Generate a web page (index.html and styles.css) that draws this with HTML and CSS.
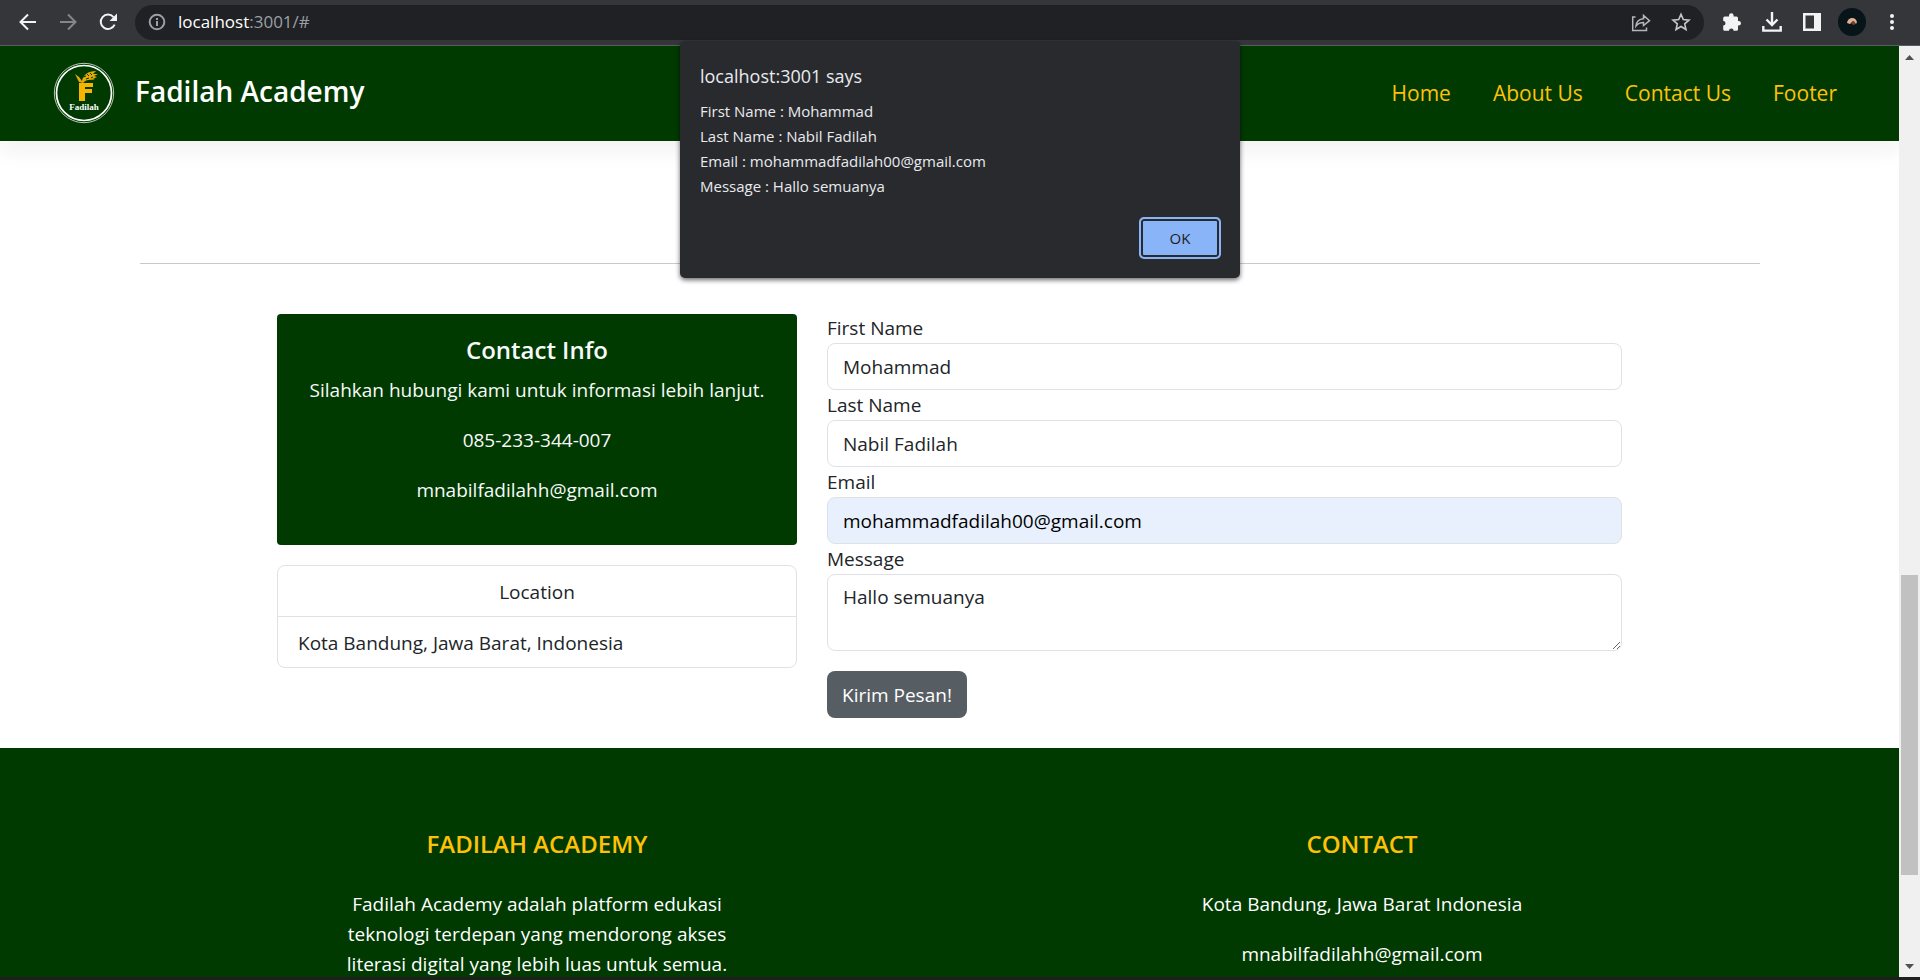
FILE: index.html
```html
<!DOCTYPE html>
<html lang="id">
<head>
<meta charset="utf-8">
<title>Fadilah Academy</title>
<link rel="stylesheet" href="styles.css">
</head>
<body>
<div class="browser">
  <div class="toolbar">
    <button class="tool" aria-label="Back"><svg width="20" height="20" viewBox="0 0 20 20" fill="none" stroke="#f1f3f4" stroke-width="2"><path d="M18 10H3M10 2.500L2.500 10L10 17.500"/></svg></button>
    <button class="tool" aria-label="Forward"><svg width="20" height="20" viewBox="0 0 20 20" fill="none" stroke="#85868a" stroke-width="2"><path d="M2 10H17M10 2.500L17.500 10L10 17.500"/></svg></button>
    <button class="tool" aria-label="Reload"><svg width="20" height="20" viewBox="0 0 20 20" fill="none" stroke="#f1f3f4" stroke-width="2"><path d="M16.600 12.600A7.200 7.200 0 1 1 15.500 5.200"/><path d="M19 1.500V9H11.500Z" fill="#f1f3f4" stroke="none"/></svg></button>
    <div class="omnibox">
      <svg width="18" height="18" viewBox="0 0 18 18" fill="none" stroke="#9aa0a6" stroke-width="2"><circle cx="9" cy="9" r="7.300"/><path d="M9 8V13M9 5V7"/></svg>
      <div class="url"><span class="host">localhost</span>:3001/#</div>
      <button class="tool" aria-label="Share"><svg width="20" height="20" viewBox="0 0 20 20" fill="none" stroke="#b4b6b9" stroke-width="1.500"><path d="M4.500 5H1.700V18.500H15.500V15.500"/><path d="M5 14C5.500 9.500 8 7 12.500 6.700V3.500L18.500 8.700L12.500 13.500V10.500C9 10.500 7 11.500 5 14Z"/></svg></button>
      <button class="tool" aria-label="Bookmark"><svg width="20" height="20" viewBox="0 0 20 20" fill="none" stroke="#c4c7c9" stroke-width="1.600"><path d="M10 2.300L12.300 7.600L18 8.100L13.700 11.900L15 17.500L10 14.500L5 17.500L6.300 11.900L2 8.100L7.700 7.600Z"/></svg></button>
    </div>
    <div class="actions">
      <button class="tool" aria-label="Extensions"><svg width="20" height="20" viewBox="0 0 20 20" fill="#f1f3f4"><path d="M7 3.500A2.300 2.300 0 0 1 11.600 3.500V4.500H14.500A1.500 1.500 0 0 1 16 6V9H16.700A2.300 2.300 0 0 1 16.700 13.600H16V17.300A1.500 1.500 0 0 1 14.500 18.800H11.600A2.300 2.300 0 0 0 7 18.800H2.700A1.500 1.500 0 0 1 1.200 17.300V13.600A2.300 2.300 0 0 0 1.200 9V6A1.500 1.500 0 0 1 2.700 4.500H7Z"/></svg></button>
      <button class="tool" aria-label="Downloads"><svg width="20" height="20" viewBox="0 0 20 20" fill="none" stroke="#f1f3f4" stroke-width="2.400"><path d="M10 0V13M4.500 7.500L10 13L15.500 7.500M1.300 14V18.600H18.700V14"/></svg></button>
      <button class="tool" aria-label="Side panel"><svg width="20" height="20" viewBox="0 0 20 20"><path fill="#f1f3f4" fill-rule="evenodd" d="M1 1H19V19H1ZM3.500 3.500V16.500H12V3.500Z"/></svg></button>
      <button class="tool avatar" aria-label="Profile"><svg width="28" height="28" viewBox="0 0 28 28"><circle cx="14" cy="14" r="14" fill="#071419"/><path d="M9 15A5.200 6 0 0 1 19 14L18 16L15 13L12 16Z" fill="#e3b08f"/><path d="M13 15L16 13L18 16L15 17Z" fill="#6b4434"/></svg></button>
      <button class="tool" aria-label="Menu"><svg width="20" height="20" viewBox="0 0 20 20" fill="#f1f3f4"><circle cx="10" cy="4" r="2"/><circle cx="10" cy="10" r="2"/><circle cx="10" cy="16" r="2"/></svg></button>
    </div>
  </div>

  <div class="viewport">
    <div class="page">
      <header class="navbar">
        <a class="brand" href="#">
          <svg width="62" height="62" viewBox="0 0 62 62">
            <circle cx="31" cy="31" r="29.700" fill="none" stroke="#b7c8b7" stroke-width="1"/>
            <circle cx="31" cy="31" r="27.500" fill="none" stroke="#fff" stroke-width="1.700"/>
            <path d="M26 21H40V25H32V27H39V31H32V39H26Z" fill="#f7b500"/>
            <path d="M26 20L22 12L26 15L29 19C30 13 35 9 43 9L40 12L45 12L41 14L44 15L40 17L42 18C36 17 32 18 30 21Z" fill="#e5aa08"/>
            <path d="M30 15L33 14M34 12L36 14M37 11L39 13M33 17L36 16M38 16L40 15" stroke="#003a00" stroke-width="1"/>
            <text class="logo-text" x="31" y="48" text-anchor="middle">Fadilah</text>
          </svg>
          <span class="brand-name">Fadilah Academy</span>
        </a>
        <nav class="links">
          <a href="#">Home</a>
          <a href="#">About Us</a>
          <a href="#">Contact Us</a>
          <a href="#">Footer</a>
        </nav>
      </header>

      <main class="container">
        <hr class="rule">
        <div class="contact">
          <div class="side">
            <section class="info">
              <h2>Contact Info</h2>
              <p>Silahkan hubungi kami untuk informasi lebih lanjut.</p>
              <p>085-233-344-007</p>
              <p>mnabilfadilahh@gmail.com</p>
            </section>
            <section class="location">
              <div class="location-title">Location</div>
              <div class="location-item">Kota Bandung, Jawa Barat, Indonesia</div>
            </section>
          </div>
          <form class="form">
            <label for="first">First Name</label>
            <input class="field" id="first" type="text" value="Mohammad">
            <label for="last">Last Name</label>
            <input class="field" id="last" type="text" value="Nabil Fadilah">
            <label for="email">Email</label>
            <input class="field autofilled" id="email" type="email" value="mohammadfadilah00@gmail.com">
            <label for="message">Message</label>
            <textarea class="field" id="message" rows="2">Hallo semuanya</textarea>
            <button class="send" type="button">Kirim Pesan!</button>
          </form>
        </div>
      </main>

      <footer class="footer">
        <div class="footer-grid">
          <section>
            <h2>FADILAH ACADEMY</h2>
            <p>Fadilah Academy adalah platform edukasi teknologi terdepan yang mendorong akses literasi digital yang lebih luas untuk semua.</p>
          </section>
          <section>
            <h2>CONTACT</h2>
            <p>Kota Bandung, Jawa Barat Indonesia</p>
            <p>mnabilfadilahh@gmail.com</p>
          </section>
        </div>
      </footer>
    </div>
    <div class="scrollbar">
      <svg width="21" height="21" viewBox="0 0 21 21"><path d="M6 14H15L10.500 9Z" fill="#505050"/></svg>
      <div class="track"><div class="thumb"></div></div>
      <svg width="21" height="21" viewBox="0 0 21 21"><path d="M6 8H15L10.500 13Z" fill="#505050"/></svg>
    </div>
  </div>

  <div class="alert" role="alertdialog" aria-labelledby="alert-title">
    <h1 id="alert-title">localhost:3001 says</h1>
    <p>First Name : Mohammad<br>Last Name : Nabil Fadilah<br>Email : mohammadfadilah00@gmail.com<br>Message : Hallo semuanya</p>
    <button class="ok" type="button">OK</button>
  </div>
</div>
</body>
</html>
```
FILE: styles.css
```css
* { box-sizing: border-box; }

body {
  margin: 0;
  font-family: "Open Sans", "Noto Sans", sans-serif;
  font-size: 19px;
  line-height: 30px;
  color: #212529;
}

h1, h2, p { margin: 0; }
svg { display: block; flex: none; }
button, input, textarea { font: inherit; }

.browser {
  position: relative;
  height: 100vh;
  display: flex;
  flex-direction: column;
  overflow: hidden;
}

/* Browser toolbar */
.toolbar {
  flex: none;
  display: flex;
  align-items: center;
  gap: 20px;
  height: 46px;
  padding: 0 18px 1px;
  background: #35363a;
  border-bottom: 1px solid #5b5c5f;
}
.tool {
  padding: 0;
  border: 0;
  background: none;
}
.omnibox {
  flex: 1;
  display: flex;
  align-items: center;
  gap: 20px;
  height: 35px;
  margin: 0 -2px 0 -3px;
  padding: 0 13px;
  border-radius: 18px;
  background: #202124;
}
.url {
  flex: 1;
  margin-left: -8px;
  font-size: 17px;
  color: #9aa0a6;
}
.host { color: #fff; }
.actions {
  display: flex;
  align-items: center;
  gap: 20px;
}
.avatar { margin: 0 -4px; }

/* Page area and scrollbar */
.viewport {
  flex: 1;
  min-height: 0;
  display: flex;
  border-bottom: 3px solid #1f1f20;
}
.page {
  flex: 1;
  display: flex;
  flex-direction: column;
  overflow: hidden;
  background: #fff;
}
.scrollbar {
  flex: none;
  width: 21px;
  display: flex;
  flex-direction: column;
  background: #f0f0f0;
}
.track {
  flex: 1;
  display: grid;
  grid-template-rows: 508fr 300fr 81fr;
  padding: 0 2px;
}
.thumb {
  grid-row: 2;
  background: #c1c1c1;
}

.navbar {
  flex: none;
  display: flex;
  align-items: center;
  justify-content: space-between;
  height: 95px;
  padding: 0 62px 2px 53px;
  background: #003a00;
  box-shadow: 0 10px 20px rgba(33, 37, 41, 0.06);
}
.brand {
  display: flex;
  align-items: center;
  gap: 20px;
  font-size: 28px;
  font-weight: 600;
  color: #fff;
  text-decoration: none;
}
.brand-name { padding-bottom: 4px; }
.logo-text {
  font-family: "Liberation Serif", serif;
  font-size: 9px;
  font-weight: 700;
  fill: #fff;
}
.links {
  display: flex;
  gap: 42px;
  font-size: 21px;
}
.links a {
  color: #ffc107;
  text-decoration: none;
}

.container {
  flex: none;
  width: 100%;
  max-width: 1650px;
  margin: 0 auto;
  padding: 122px 15px 30px;
}
.rule {
  margin: 0 0 50px;
  border: 0;
  border-top: 1px solid #c8c9ca;
}
.contact {
  display: grid;
  grid-template-columns: 520fr 795fr;
  gap: 30px;
  max-width: 1345px;
  margin: 0 auto;
}
.side {
  display: flex;
  flex-direction: column;
  gap: 20px;
}
.info {
  display: flex;
  flex-direction: column;
  gap: 20px;
  padding: 21px 20px 40px;
  border-radius: 4px;
  background: #003a00;
  color: #f8f9fa;
  text-align: center;
}
.info h2 {
  margin-bottom: -10px;
  font-size: 24px;
  font-weight: 600;
}
.location {
  border: 1px solid #dee2e6;
  border-radius: 8px;
}
.location-title {
  padding: 11px 20px 9px;
  border-bottom: 1px solid #dee2e6;
  text-align: center;
}
.location-item { padding: 11px 20px 9px; }

.form {
  display: flex;
  flex-direction: column;
  margin-top: -1px;
}
.field {
  width: 100%;
  height: 47px;
  padding: 7px 15px;
  border: 1px solid #dee2e6;
  border-radius: 8px;
  background: #fff;
  color: #212529;
}
textarea.field {
  display: block;
  height: 77px;
  resize: vertical;
}
.autofilled {
  background: #e8f0fe;
  color: #000;
}
.send {
  align-self: flex-start;
  height: 47px;
  margin-top: 20px;
  padding: 0 15px;
  border: 0;
  border-radius: 8px;
  background: #565e64;
  color: #fff;
}

.footer {
  flex: 1 0 auto;
  padding: 81px 15px;
  background: #003a00;
  color: #fff;
  text-align: center;
}
.footer-grid {
  display: grid;
  grid-template-columns: 1fr 1fr;
  max-width: 1650px;
  margin: 0 auto;
}
.footer section {
  display: flex;
  flex-direction: column;
  align-items: center;
  gap: 20px;
}
.footer h2 {
  margin-bottom: 10px;
  font-size: 24px;
  font-weight: 600;
  color: #ffc107;
}
.footer p { max-width: 412px; }

/* Alert window */
.alert {
  position: absolute;
  top: 41px;
  left: 50%;
  transform: translateX(-50%);
  width: 560px;
  display: flex;
  flex-direction: column;
  padding: 20px 19px 19px 20px;
  border-radius: 5px;
  background: #292a2d;
  box-shadow: 0 2px 5px rgba(0, 0, 0, 0.6);
  color: #e8eaed;
}
.alert h1 {
  font-size: 18px;
  font-weight: 400;
}
.alert p {
  margin-top: 8px;
  font-size: 15px;
  line-height: 25px;
}
.ok {
  align-self: flex-end;
  width: 82px;
  height: 42px;
  margin-top: 18px;
  border: 2px solid #8ab4f8;
  border-radius: 5px;
  background: #8ab4f8;
  box-shadow: inset 0 0 0 2px #292a2d;
  font-size: 15px;
  color: #202124;
}
```
